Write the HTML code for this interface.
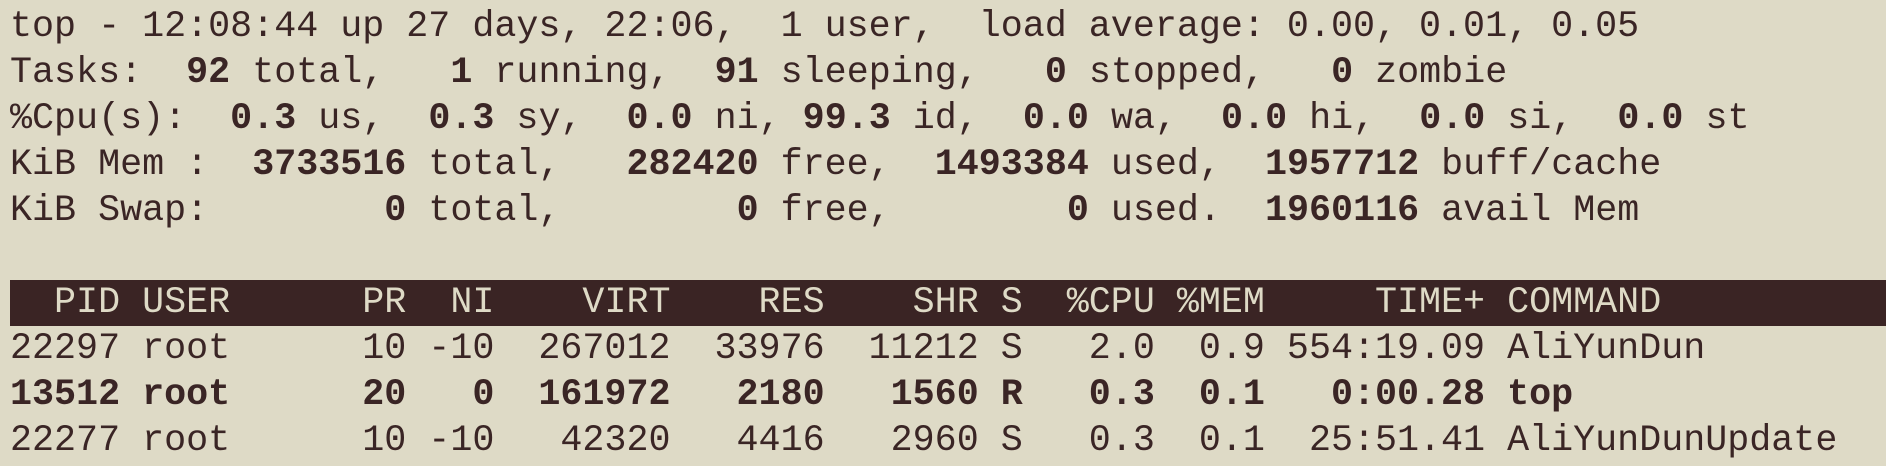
<!DOCTYPE html>
<html><head><meta charset="utf-8"><style>
html,body{margin:0;padding:0;}
body{width:1886px;height:466px;background:#dedac6;overflow:hidden;position:relative;}
pre{margin:0;position:absolute;left:10px;top:4px;font-family:"Liberation Mono",monospace;font-size:36.7px;line-height:46px;color:#3a2525;white-space:pre;}
b{font-weight:bold;}
.h{display:inline-block;background:#3a2424;color:#dedac6;width:1876px;}
</style></head><body>
<pre>top - 12:08:44 up 27 days, 22:06,  1 user,  load average: 0.00, 0.01, 0.05
Tasks:  <b>92</b> total,   <b>1</b> running,  <b>91</b> sleeping,   <b>0</b> stopped,   <b>0</b> zombie
%Cpu(s):  <b>0.3</b> us,  <b>0.3</b> sy,  <b>0.0</b> ni, <b>99.3</b> id,  <b>0.0</b> wa,  <b>0.0</b> hi,  <b>0.0</b> si,  <b>0.0</b> st
KiB Mem :  <b>3733516</b> total,   <b>282420</b> free,  <b>1493384</b> used,  <b>1957712</b> buff/cache
KiB Swap:        <b>0</b> total,        <b>0</b> free,        <b>0</b> used.  <b>1960116</b> avail Mem

<span class="h">  PID USER      PR  NI    VIRT    RES    SHR S  %CPU %MEM     TIME+ COMMAND</span>
22297 root      10 -10  267012  33976  11212 S   2.0  0.9 554:19.09 AliYunDun
<b>13512 root      20   0  161972   2180   1560 R   0.3  0.1   0:00.28 top</b>
22277 root      10 -10   42320   4416   2960 S   0.3  0.1  25:51.41 AliYunDunUpdate</pre>
</body></html>
